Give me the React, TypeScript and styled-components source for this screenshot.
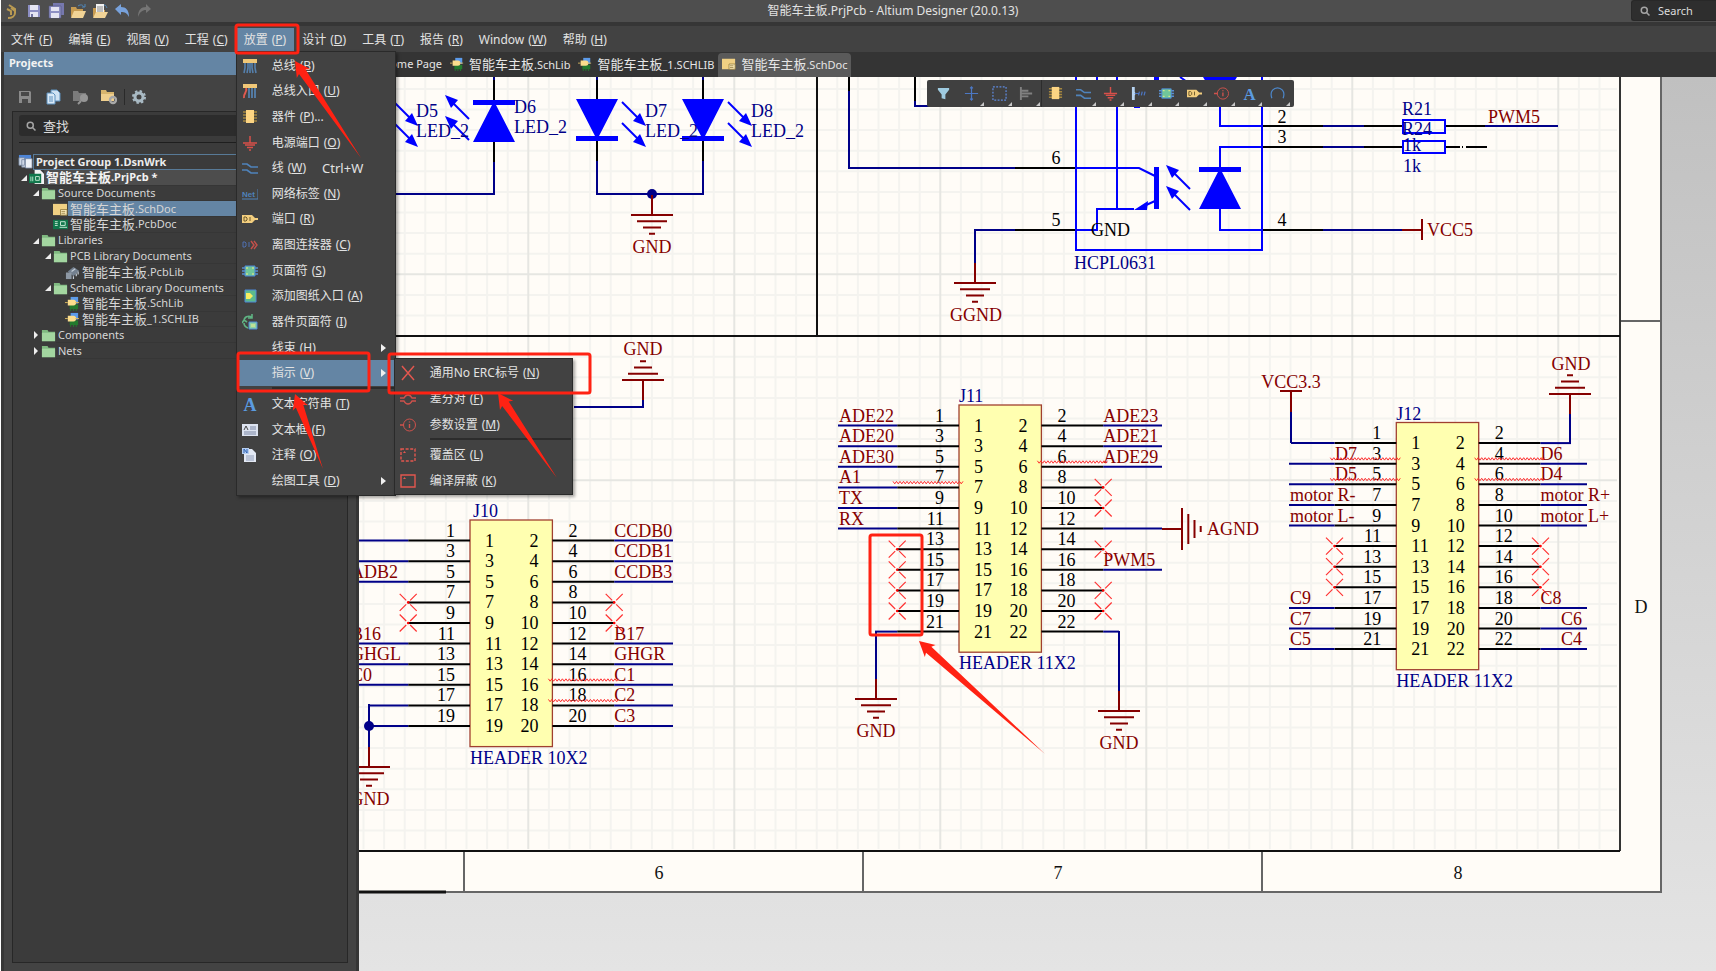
import React from "react";
import styled, { createGlobalStyle } from "styled-components";

const Global = createGlobalStyle`
  *, *::before, *::after { box-sizing: border-box; }
  body {
    margin: 0;
    background: #fff;
    color: #e2e2e2;
    font-family: "Noto Sans", "Noto Sans CJK SC", sans-serif;
    font-size: 12px;
    line-height: 16px;
  }
  button, input { font: inherit; color: inherit; }
  button { border: 0; margin: 0; padding: 0; background: none; text-align: left; white-space: nowrap; }
  ul { list-style: none; margin: 0; padding: 0; }
`;

/* ---------- page frame ---------- */

const Page = styled.div`
  position: relative;
  display: flex;
  flex-direction: column;
  min-height: 100vh;
  padding-left: 1px;
  overflow: hidden;
`;

const TitleBar = styled.header`
  display: flex;
  height: 26px;
  background: #4e4e4e;
  border-bottom: 4px solid #363636;
`;

const QuickTools = styled.div`
  display: flex;
  align-items: center;
  gap: 6px;
  width: 154px;
  padding-left: 3px;
`;

const IconButton = styled.button`
  display: flex;
  align-items: center;
  justify-content: center;
  width: 16px;
  height: 16px;
`;

const WindowTitle = styled.h1`
  flex: 1;
  margin: 0;
  font-size: 12px;
  font-weight: 400;
  line-height: 22px;
  text-align: center;
`;

const GlobalSearch = styled.label`
  display: flex;
  align-items: center;
  gap: 7px;
  width: 85px;
  height: 21px;
  padding-left: 7px;
  background: #2e2e2e;
  border: 1px solid #282828;
  border-right: 0;
  border-radius: 3px 0 0 3px;
`;

const PlainInput = styled.input<{ $size: number }>`
  flex: 1;
  min-width: 0;
  padding: 0;
  border: 0;
  outline: 0;
  background: none;
  font-size: ${(p) => p.$size}px;
  &::placeholder { color: #dcdcdc; opacity: 1; }
`;

const MenuBar = styled.nav`
  display: flex;
  align-items: flex-end;
  height: 26px;
  padding-left: 2px;
  background: #424242;
`;

const MenuSlot = styled.div`
  position: relative;
`;

const MenuButton = styled.button<{ $open?: boolean }>`
  height: 24px;
  padding: 0 8px;
  background: ${(p) => (p.$open ? "#6485a4" : "transparent")};
`;

const Mnemonic = styled.span`
  margin-left: 4px;
`;

const Work = styled.div`
  display: flex;
  flex: 1;
`;

/* ---------- drop-down menus ---------- */

const Popup = styled.div<{ $width: number }>`
  position: absolute;
  z-index: 2;
  width: ${(p) => p.$width}px;
  padding: 1px;
  background: #424242;
  border: 1px solid #2a2a2a;
  box-shadow: 2px 2px 3px rgba(0, 0, 0, 0.35);
`;

const DropDown = styled(Popup)`
  top: 100%;
  left: 0;
  margin-top: -1px;
`;

const SubMenu = styled(Popup)`
  top: -2px;
  left: 100%;
`;

const Group = styled.ul<{ $height: number }>`
  display: grid;
  grid-auto-rows: 1fr;
  height: ${(p) => p.$height}px;
`;

const Entry = styled.li<{ $active?: boolean }>`
  position: relative;
  display: flex;
  background: ${(p) => (p.$active ? "#6485a4" : "transparent")};
`;

const EntryButton = styled.button`
  display: flex;
  align-items: center;
  width: 100%;
`;

const EntryIcon = styled.span`
  display: flex;
  justify-content: center;
  width: 24px;
  margin-right: 10px;
`;

const Shortcut = styled.span`
  margin-left: 16px;
  font-size: 13px;
`;

const Caret = styled.span`
  margin-left: auto;
  margin-right: 8px;
  border: 4px solid transparent;
  border-left: 5px solid #f0f0f0;
  border-right: 0;
`;

const Separator = styled.hr`
  height: 2px;
  margin: 1px 0 2px 34px;
  border: 0;
  background: #2c2c2c;
`;

/* ---------- projects panel ---------- */

const Panel = styled.aside`
  display: flex;
  flex-direction: column;
  flex: none;
  width: 358px;
  background: #434343;
  border-left: 3px solid #373737;
  border-right: 3px solid #353535;
`;

const PanelTitle = styled.h2`
  height: 23px;
  margin: 0;
  padding-left: 5px;
  background: #6485a4;
  color: #f2f2f2;
  font-size: 11px;
  font-weight: 700;
  line-height: 22px;
`;

const PanelTools = styled.div`
  display: flex;
  align-items: center;
  gap: 12px;
  height: 36px;
  padding: 8px 0 0 13px;
`;

const ToolRule = styled.span`
  width: 1px;
  height: 16px;
  margin: 0 -6px 0 -5px;
  background: #2a2a2a;
`;

const PanelBody = styled.div`
  flex: 1;
  margin: 0 8px 8px;
  padding-top: 3px;
  background: #3b3b3b;
  border: 1px solid #272727;
`;

const TreeSearch = styled.label`
  display: flex;
  align-items: center;
  gap: 6px;
  height: 21px;
  margin: 0 6px;
  padding-left: 6px;
  background: #2c2c2c;
  border-radius: 3px;
`;

const SearchRule = styled.hr`
  height: 1px;
  margin: 6px 6px 11px;
  border: 0;
  background: #1e1e1e;
`;

const Tree = styled.ul`
  display: grid;
  grid-auto-rows: 1fr;
  height: 205px;
`;

const Node = styled.li<{ $level: number }>`
  display: flex;
  align-items: center;
  min-height: 0;
  padding-left: ${(p) => (p.$level ? p.$level * 12 - 7 : 5)}px;
`;

const Twisty = styled.span<{ $kind?: "open" | "closed" }>`
  display: flex;
  flex: none;
  width: 11px;
  justify-content: center;
  &::before {
    content: "";
    display: ${(p) => (p.$kind ? "block" : "none")};
    border-style: solid;
    border-color: ${(p) =>
      p.$kind === "open" ? "transparent #eee #eee transparent" : "transparent transparent transparent #eee"};
    border-width: ${(p) => (p.$kind === "open" ? "3px" : "4px 0 4px 4px")};
  }
`;

const NodeName = styled.span<{ $look?: "root" | "project" | "selected" }>`
  flex: 1;
  align-self: stretch;
  display: flex;
  align-items: center;
  padding-left: 2px;
  color: #d6d6d6;
  font-size: 11px;
  font-weight: ${(p) => (p.$look === "root" || p.$look === "project" ? 700 : 400)};
  white-space: nowrap;
  background: ${(p) => (p.$look === "selected" ? "#6485a4" : p.$look === "project" ? "#4d4d4d" : "none")};
  border-bottom: 1px solid #363636;
  ${(p) => p.$look === "root" && "border: 1px solid #587a97; border-right: 0; color: #ececec;"}
  ${(p) => p.$look === "project" && "color: #f2f2f2;"}
`;

const Han = styled.span`
  font-family: "Noto Sans CJK SC", sans-serif;
  font-size: 13px;
`;

/* ---------- documents ---------- */

const Documents = styled.main`
  display: flex;
  flex: 1;
  flex-direction: column;
  min-width: 0;
`;

const Tabs = styled.div`
  display: flex;
  align-items: flex-end;
  height: 25px;
  background: #343434;
`;

const Tab = styled.button<{ $active?: boolean; $home?: boolean }>`
  display: flex;
  align-items: center;
  justify-content: flex-end;
  gap: 5px;
  height: 24px;
  min-width: ${(p) => (p.$home ? 87 : 0)}px;
  padding: 0 4px 2px;
  border-radius: 4px 4px 0 0;
  background: ${(p) => (p.$active ? "#5a5a5a" : "transparent")};
  color: #e6e6e6;
  font-size: 11px;
`;

const Canvas = styled.section`
  position: relative;
  flex: 1;
  overflow: hidden;
  background: linear-gradient(#c0c0c0, #e4e4e4);
`;

const Sheet = styled.svg`
  display: block;
  text {
    font-family: "Liberation Serif", serif;
    font-size: 18px;
  }
`;

const ActiveBar = styled.div`
  position: absolute;
  top: 3px;
  left: 568px;
  display: flex;
  width: 367px;
  height: 27px;
  padding: 0 3px;
  background: #404040;
  border-radius: 2px;
`;

const BarButton = styled.button<{ $more?: boolean; $rule?: boolean }>`
  position: relative;
  display: flex;
  flex: 1;
  align-items: center;
  justify-content: center;
  border-right: ${(p) => (p.$rule ? "1px solid #2c2c2c" : "0")};
  &::after {
    content: "";
    position: absolute;
    right: 1px;
    bottom: 1px;
    display: ${(p) => (p.$more ? "block" : "none")};
    border: 2px solid;
    border-color: transparent #c8c8c8 #c8c8c8 transparent;
  }
`;

const Markup = styled.svg`
  position: absolute;
  top: 0;
  left: 0;
  z-index: 3;
  pointer-events: none;
`;

/* ---------- icons ---------- */

const drawings = {
  logo: <path d="M5 2l6 4v4c0 3-3 5-7 5M3 6l4 2v4M11 8L7 5" fill="none" stroke="#b99a52" strokeWidth="2" />,
  save: (
    <>
      <path d="M2 2h11l1 1v11H2z" fill="#8d8fc4" />
      <path d="M4 2h8v5H4zM4 9h8v5H4z" fill="#e4e4f2" />
      <path d="M5 11h2v3H5z" fill="#6f719f" />
    </>
  ),
  saveGray: (
    <>
      <path d="M2 2h11l1 1v11H2z" fill="#8a8a8a" />
      <path d="M4 3h8v4H4zM5 10h6v4H5z" fill="#484848" />
    </>
  ),
  saveAll: (
    <>
      <path d="M5 0h11v12H5z" fill="#7678ae" />
      <path d="M1 3h12v12H1z" fill="#8d8fc4" stroke="#55577f" strokeWidth=".6" />
      <path d="M3 4h8v4H3zM3 10h8v5H3z" fill="#e4e4f2" />
    </>
  ),
  open: (
    <>
      <path d="M1 14V4h5l1 2h6v3" fill="#c79b51" />
      <path d="M1 15l3-7h12l-3 7z" fill="#f1d396" />
      <path d="M8 3c3-2 5-1 6 1m1-3v3h-3" fill="none" stroke="#4f86b8" />
    </>
  ),
  openDoc: (
    <>
      <path d="M1 14V5h4l1 2h7v3" fill="#c79b51" />
      <path d="M4 1h8v9H4z" fill="#f2f2f2" />
      <path d="M5 4h6M5 6h6M5 8h6" stroke="#888" />
      <path d="M1 15l3-6h12l-3 6z" fill="#f1d396" />
      <path d="M12 2c2 0 2 1 3 3" fill="none" stroke="#4f86b8" />
    </>
  ),
  undo: <path d="M1 6l6-5v3c5 0 8 3 8 10-2-4-4-5-8-5v3z" fill="#78a2dc" />,
  redo: <path d="M15 6l-5-5v3c-5 0-8 3-8 10 2-5 4-7 8-7v3z" fill="#757575" />,
  docs: (
    <>
      <path d="M6 1h6l3 3v8H6z" fill="#cfe2f3" stroke="#5d90bd" />
      <path d="M2 4h6l2 2v9H2z" fill="#d9e9f7" stroke="#5d90bd" />
      <path d="M4 8h4M4 10h4M4 12h4" stroke="#5d90bd" />
    </>
  ),
  folderGray: (
    <>
      <path d="M0 2h5l1 2h7v8H0z" fill="#7b7b7b" />
      <circle cx="11" cy="9" r="4" fill="#969696" />
      <path d="M8 12l-3 3" stroke="#969696" strokeWidth="2" />
    </>
  ),
  folderGear: (
    <>
      <path d="M0 1h5l1 2h7v9H0z" fill="#d8b56e" />
      <path d="M0 5h13v7H0z" fill="#efcf8e" />
      <circle cx="12" cy="11" r="3" fill="none" stroke="#a8a8a8" strokeWidth="2.4" />
    </>
  ),
  gear: (
    <>
      <circle cx="8" cy="8" r="4" fill="none" stroke="#a9bac4" strokeWidth="3" />
      <circle cx="8" cy="8" r="6" fill="none" stroke="#a9bac4" strokeWidth="2" strokeDasharray="2.4 2.3" />
    </>
  ),
  search: (
    <>
      <circle cx="7" cy="7" r="4" fill="none" stroke="#a5a5a5" strokeWidth="2" />
      <path d="M10 10l4 4" stroke="#a5a5a5" strokeWidth="2" />
    </>
  ),
  bus: (
    <>
      <path d="M3 5v5l-1 5M6 5v5l-1 5M10 5v5l1 5M13 5v5l1 5M8 5v10" stroke="#5580ad" strokeWidth="1.6" fill="none" />
      <path d="M1 1h14v4H1z" fill="#f0c777" />
    </>
  ),
  busEntry: (
    <>
      <path d="M7 5v10M10 5v10M13 5v10" stroke="#5580ad" strokeWidth="1.8" fill="none" />
      <path d="M4 5c2 4-3 5-2 10" stroke="#e05a50" strokeWidth="2" fill="none" />
      <path d="M1 1h14v4H1z" fill="#f0c777" />
    </>
  ),
  part: (
    <>
      <path d="M1 3h14M1 6h14M1 9h14M1 12h14" stroke="#a3853f" strokeWidth="1.6" />
      <path d="M4 1h8v13H4z" fill="#fbd483" />
    </>
  ),
  power: <path d="M8 1v7M1 8h14M3 10h10M5 12.500h6M7 15h2" stroke="#d8504a" strokeWidth="1.500" fill="none" />,
  wire: <path d="M0 4h5l4 3h7M0 10h5l4 3h7" stroke="#4f83bb" strokeWidth="1.700" fill="none" />,
  net: (
    <>
      <text x="0" y="11" fontSize="8" fontWeight="700" fontFamily="Liberation Sans" fill="#4f83bb">Net</text>
      <path d="M0 13h16V3" stroke="#4f83bb" fill="none" />
    </>
  ),
  port: (
    <>
      <path d="M0 4h10l4 4-4 4H0zM12 7h4v2h-4z" fill="#f3ce7e" />
      <path d="M2 6h2l1 1v2l-1 1H2zM8 6v4" stroke="#6d5a2b" fill="none" />
    </>
  ),
  offSheet: (
    <>
      <path d="M1 5h2l1 1v3l-1 1H1zM7 5v5" stroke="#4f6fae" fill="none" />
      <path d="M9 4l3 4-3 4M12 4l3 4-3 4" stroke="#c5504a" fill="none" strokeWidth="1.400" />
    </>
  ),
  sheet: (
    <>
      <path d="M0 5h16M0 8h16M0 11h16" stroke="#5a8fd0" strokeWidth="1.500" />
      <path d="M3 3h10v10H3z" fill="#70c69a" stroke="#4c88d8" />
      <path d="M4 5h2M10 5h2M4 11h2M10 11h2" stroke="#f1ef88" />
    </>
  ),
  sheetEntry: (
    <>
      <path d="M3 2h11v12H3z" fill="#5cba8c" stroke="#4c88d8" />
      <path d="M4 5h4l3 3-3 3H4z" fill="#f5ee62" />
    </>
  ),
  deviceSheet: (
    <>
      <path d="M2 7C2 3 6 1 10 3M10 0v4H6M2 9c0 3 1 4 4 5M0 9l2-3 3 2" stroke="#5fb383" strokeWidth="1.600" fill="none" />
      <path d="M7 8h8v7H7z" fill="#8cd0a4" stroke="#4c88d8" />
      <path d="M10 10v3M12 10v3" stroke="#f1ef88" />
    </>
  ),
  letter: (
    <text x="8" y="15" fontSize="18" fontWeight="700" fontFamily="Liberation Serif" textAnchor="middle" fill="#5b9be0">A</text>
  ),
  frame: (
    <>
      <path d="M0 2h16v12H0z" fill="#dde3f0" />
      <path d="M8 5h6M8 7h6M2 10h12M2 12h12" stroke="#7d88a5" />
      <path d="M2 8l2-4 2 4" stroke="#444" fill="none" />
    </>
  ),
  note: (
    <>
      <path d="M2 2h8l4 4v9H2z" fill="#e3e9f4" />
      <path d="M0 1h7v6H0z" fill="#b6cff2" />
      <path d="M2 6V2l3 4V2" stroke="#2e63b5" fill="none" />
      <path d="M4 9h8M4 11h8M4 13h8" stroke="#8f9cb8" />
    </>
  ),
  cross: <path d="M2 1l12 14M14 1L2 15" stroke="#e2574f" strokeWidth="1.500" />,
  pair: <path d="M0 7h4c2-4 6-4 8 0h4M0 10h4c2 4 6 4 8 0h4" stroke="#cf524c" strokeWidth="1.400" fill="none" />,
  param: (
    <>
      <circle cx="9.500" cy="8" r="6" fill="none" stroke="#cf524c" />
      <path d="M0 8h4M9.500 7v4M9.500 4.500v1" stroke="#cf524c" strokeWidth="1.400" />
    </>
  ),
  blanket: (
    <>
      <path d="M1 2h14v12H1z" fill="none" stroke="#e2574f" strokeWidth="1.400" strokeDasharray="3 1.600" />
      <path d="M3 6l1.500-2L6 6z" fill="#e2574f" />
    </>
  ),
  mask: (
    <>
      <path d="M1 2h14v12H1z" fill="none" stroke="#e2574f" strokeWidth="1.400" />
      <path d="M3 6l1.500-2L6 6z" fill="#e2574f" />
    </>
  ),
  filter: <path d="M2 2h12v2l-4 5v5l-4-1V9L2 4z" fill="#9fcbe0" />,
  move: <path d="M8 1v14M1 8h14M6.500 2.500L8 1l1.500 1.500M6.500 13.500L8 15l1.500-1.500" stroke="#4c78c4" fill="none" strokeWidth="1.300" />,
  select: <path d="M1 1h14v14H1z" stroke="#5e8ae0" fill="none" strokeWidth="1.300" strokeDasharray="2 1.500" />,
  align: <path d="M2 1v14M3 5h7M3 8h11M3 11h7" stroke="#808080" strokeWidth="2" fill="none" />,
  harness: (
    <>
      <path d="M1 1h3v5l1 2-1 2v5H1z" fill="#b7d4f2" />
      <path d="M4 8h4M8 10l1-4M11 10l1-4M14 10l1-4" stroke="#4c76c4" fill="none" strokeWidth="1.300" />
    </>
  ),
  arc: <path d="M2 13C-1 5 5 2 8 2s9 3 6 11" stroke="#4c86c8" fill="none" strokeWidth="1.300" />,
  workspace: (
    <>
      <path d="M1 1h13v7H1z" fill="#4e85d6" />
      <path d="M1 4h6v8H1zM4 6h6v8H4z" fill="#cfd8e6" stroke="#73839c" strokeWidth=".8" />
      <path d="M8 5h7v10H8z" fill="#eef1f6" stroke="#73839c" strokeWidth=".8" />
    </>
  ),
  project: (
    <>
      <path d="M6 0h6l4 4v11H6z" fill="#f3f3f3" />
      <path d="M0 4h13v10H0z" fill="#11774c" />
      <path d="M2 7v5M4 7v5M7 7h4v4H7z" stroke="#bfe6cf" fill="none" />
    </>
  ),
  folder: (
    <>
      <path d="M1 2h6l1 2h7v10H1z" fill="#7fb980" />
      <path d="M1 5h14v9H1z" fill="#a3d6a0" />
    </>
  ),
  schDoc: (
    <>
      <path d="M0 2h15v12H0z" fill="#f0d083" />
      <path d="M8 8h7v6H8zM9 10h4M9 12h4" fill="#f9e9b8" stroke="#8b7334" strokeWidth=".8" />
    </>
  ),
  pcbDoc: (
    <>
      <path d="M0 3h16v10H0z" fill="#11774c" />
      <path d="M2 5h3M2 7h3M2 9h3M8 5h5v4H8zM7 11h8" stroke="#c7e9d5" fill="none" />
    </>
  ),
  pcbLib: (
    <>
      <path d="M3 7l6-5 6 4-6 6z" fill="#73808f" />
      <path d="M7 7l4-3M9 12v3M12 9v3M14 7v3" stroke="#c3ccd6" strokeWidth="1.300" />
      <path d="M1 8h6v7H1z" fill="#8d98a4" />
    </>
  ),
  schLib: (
    <>
      <path d="M6 1h8v7H6z" fill="#5c9bea" />
      <path d="M5 9h9v5H5z" fill="#237a2e" />
      <path d="M6 13v3M9 13v3M12 13v3" stroke="#237a2e" />
      <path d="M3 4h6c4 0 4 6 0 6H3z" fill="#fbdd8d" />
      <path d="M0 7h3M11 7h4" stroke="#d8b760" />
    </>
  ),
};

type IconName = keyof typeof drawings;

const Glyph = styled.svg`
  flex: none;
`;

const Icon = ({ name, size = 16 }: { name: IconName; size?: number }) => (
  <Glyph width={size} height={size} viewBox="0 0 16 16" aria-hidden="true">
    {drawings[name]}
  </Glyph>
);

/* ---------- menu data ---------- */

type Item = { icon?: IconName; name: string; keyChar: string; tail?: string; shortcut?: string; more?: boolean; active?: boolean; sub?: Item[][] };

const directives: Item[][] = [
  [
    { icon: "cross", name: "通用No ERC标号", keyChar: "N" },
    { icon: "pair", name: "差分对", keyChar: "F" },
    { icon: "param", name: "参数设置", keyChar: "M" },
  ],
  [
    { icon: "blanket", name: "覆盖区", keyChar: "L" },
    { icon: "mask", name: "编译屏蔽", keyChar: "K" },
  ],
];

const placeMenu: Item[][] = [
  [
    { icon: "bus", name: "总线", keyChar: "B" },
    { icon: "busEntry", name: "总线入口", keyChar: "U" },
    { icon: "part", name: "器件", keyChar: "P", tail: "..." },
    { icon: "power", name: "电源端口", keyChar: "O" },
    { icon: "wire", name: "线", keyChar: "W", shortcut: "Ctrl+W" },
    { icon: "net", name: "网络标签", keyChar: "N" },
    { icon: "port", name: "端口", keyChar: "R" },
    { icon: "offSheet", name: "离图连接器", keyChar: "C" },
    { icon: "sheet", name: "页面符", keyChar: "S" },
    { icon: "sheetEntry", name: "添加图纸入口", keyChar: "A" },
    { icon: "deviceSheet", name: "器件页面符", keyChar: "I" },
    { name: "线束", keyChar: "H", more: true },
    { name: "指示", keyChar: "V", more: true, active: true, sub: directives },
  ],
  [
    { icon: "letter", name: "文本字符串", keyChar: "T" },
    { icon: "frame", name: "文本框", keyChar: "F" },
    { icon: "note", name: "注释", keyChar: "O" },
    { name: "绘图工具", keyChar: "D", more: true },
  ],
];

const menus: [string, string][] = [
  ["文件", "F"], ["编辑", "E"], ["视图", "V"], ["工程", "C"], ["放置", "P"],
  ["设计", "D"], ["工具", "T"], ["报告", "R"], ["Window", "W"], ["帮助", "H"],
];

const Label = ({ name, keyChar, tail }: { name: string; keyChar: string; tail?: string }) => (
  <span>
    {name}
    <Mnemonic>(<u>{keyChar}</u>){tail}</Mnemonic>
  </span>
);

const MenuGroups = ({ groups, heights }: { groups: Item[][]; heights: number[] }) => (
  <>
    {groups.map((items, g) => (
      <React.Fragment key={g}>
        {g > 0 && <Separator />}
        <Group $height={heights[g]}>
          {items.map((it) => (
            <Entry key={it.name} $active={it.active}>
              <EntryButton>
                <EntryIcon>{it.icon && <Icon name={it.icon} />}</EntryIcon>
                <Label name={it.name} keyChar={it.keyChar} tail={it.tail} />
                {it.shortcut && <Shortcut>{it.shortcut}</Shortcut>}
                {it.more && <Caret />}
              </EntryButton>
              {it.sub && (
                <SubMenu $width={179}>
                  <MenuGroups groups={it.sub} heights={[77, 51]} />
                </SubMenu>
              )}
            </Entry>
          ))}
        </Group>
      </React.Fragment>
    ))}
  </>
);

/* ---------- project tree ---------- */

type TreeRow = { level: number; icon: IconName; han?: string; text: string; kind?: "open" | "closed"; look?: "root" | "project" | "selected" };

const tree: TreeRow[] = [
  { level: 0, icon: "workspace", text: "Project Group 1.DsnWrk", look: "root" },
  { level: 1, icon: "project", han: "智能车主板", text: ".PrjPcb *", kind: "open", look: "project" },
  { level: 2, icon: "folder", text: "Source Documents", kind: "open" },
  { level: 3, icon: "schDoc", han: "智能车主板", text: ".SchDoc", look: "selected" },
  { level: 3, icon: "pcbDoc", han: "智能车主板", text: ".PcbDoc" },
  { level: 2, icon: "folder", text: "Libraries", kind: "open" },
  { level: 3, icon: "folder", text: "PCB Library Documents", kind: "open" },
  { level: 4, icon: "pcbLib", han: "智能车主板", text: ".PcbLib" },
  { level: 3, icon: "folder", text: "Schematic Library Documents", kind: "open" },
  { level: 4, icon: "schLib", han: "智能车主板", text: ".SchLib" },
  { level: 4, icon: "schLib", han: "智能车主板", text: "_1.SCHLIB" },
  { level: 2, icon: "folder", text: "Components", kind: "closed" },
  { level: 2, icon: "folder", text: "Nets", kind: "closed" },
];

/* ---------- schematic ---------- */

const NAVY = "#000088";
const BLUE = "#0000ff";
const MAROON = "#850000";
const STEP = 20.6;

const Line = ({ d, c = NAVY, w = 2 }: { d: string; c?: string; w?: number }) => (
  <path d={d} stroke={c} strokeWidth={w} fill="none" />
);

const T = ({ x, y, c = MAROON, a = "start", children }: { x: number; y: number; c?: string; a?: "start" | "middle" | "end"; children: React.ReactNode }) => (
  <text x={x} y={y} fill={c} textAnchor={a}>{children}</text>
);

/* Ground symbol: (x, y) is the widest bar, turned about that point. */
const Ground = ({ x, y, turn = 0 }: { x: number; y: number; turn?: number }) => (
  <g transform={`translate(${x} ${y}) rotate(${turn})`}>
    <Line c={MAROON} d="M0 -20V0M-21 0H21M-15 6.300H15M-9 12.500H9M-3 18.700H3" />
  </g>
);

const NoErc = ({ x, y }: { x: number; y: number }) => (
  <g transform={`translate(${x} ${y})`}>
    <path d="M-8.500 -8.500L-2 -2M8.500 -8.500L2 -2M-8.500 8.500L-2 2M8.500 8.500L2 2" stroke="#f33" strokeWidth="1.200" />
    <circle r="1.300" fill="#f00" />
  </g>
);

const Squiggle = ({ x, y }: { x: number; y: number }) => (
  <path
    d={`M${x} ${y - 1}` + Array.from({ length: 20 }, () => "l1.750 2.400l1.750 -2.400").join("")}
    stroke="#ff2a2a"
    fill="none"
  />
);

/* Light arrow of an LED, pointing at (x, y). */
const Ray = ({ x, y, up }: { x: number; y: number; up?: boolean }) => (
  <g transform={`translate(${x} ${y}) rotate(${up ? 180 : 0})`}>
    <Line c={BLUE} d="M-24 -24L-6 -6" />
    <path d="M0 0L-13 -5L-6 -13Z" fill={BLUE} />
  </g>
);

const Led = ({ x, y, up }: { x: number; y: number; up?: boolean }) => (
  <g transform={`translate(${x} ${y}) scale(1 ${up ? -1 : 1})`} fill={BLUE}>
    <path d="M-21 -21H21L2 16H21V21H-21V16H-2Z" />
  </g>
);

type Side = { net?: string; at?: number; wire?: number; x?: boolean; warn?: boolean };

const Header = ({ x, y, name, title, titleDx = 0, left, right }: { x: number; y: number; name: string; title: string; titleDx?: number; left: Side[]; right: Side[] }) => {
  const w = STEP * 4;
  const r = x + w;
  const h = STEP * (left.length + 1);
  const pin = STEP * 3;
  return (
    <g>
      <rect x={x} y={y} width={w} height={h} fill="#ffffb0" stroke="#a04030" strokeWidth="1.300" />
      <T x={x + titleDx} y={y - 3} c={NAVY}>{title}</T>
      <T x={x} y={y + h + 17} c={NAVY}>{name}</T>
      {left.map((s, i) => {
        const py = y + STEP * (i + 1);
        return (
          <g key={i}>
            <Line c="#000" d={`M${x - pin} ${py}H${x}`} />
            <T x={x - 15} y={py - 4} c="#000" a="end">{i * 2 + 1}</T>
            <T x={x + 15} y={py + 6} c="#000">{i * 2 + 1}</T>
            {s.wire && <Line d={`M${s.wire} ${py}H${x - pin}`} />}
            {s.net && <T x={s.at ?? (s.wire ?? x) + 1} y={py - 4}>{s.net}</T>}
            {s.warn && <Squiggle x={x - 66} y={py - 5} />}
            {s.x && <NoErc x={x - pin} y={py} />}
          </g>
        );
      })}
      {right.map((s, i) => {
        const py = y + STEP * (i + 1);
        return (
          <g key={i}>
            <Line c="#000" d={`M${r} ${py}H${r + pin}`} />
            <T x={r + 16} y={py - 4} c="#000">{i * 2 + 2}</T>
            <T x={r - 14} y={py + 6} c="#000" a="end">{i * 2 + 2}</T>
            {s.wire && <Line d={`M${r + pin} ${py}H${s.wire}`} />}
            {s.net && <T x={s.at ?? r + pin} y={py - 4}>{s.net}</T>}
            {s.warn && <Squiggle x={r - 4} y={py - 5} />}
            {s.x && <NoErc x={r + pin} y={py} />}
          </g>
        );
      })}
    </g>
  );
};

const gridLines = (major: boolean) => {
  let d = "";
  for (let k = -9; k <= 53; k++) {
    const gx = 528.3 + STEP * k;
    if ((k % 10 === 0) === major && gx > 359 && gx < 1618) d += `M${gx} 77V849`;
  }
  for (let k = -9; k <= 27; k++) {
    const gy = 274.3 + STEP * k;
    if ((k % 10 === 0) === major && gy > 77 && gy < 849) d += `M359 ${gy}H1617`;
  }
  return d;
};

const X: Side = { x: true };

const Schematic = () => (
  <Sheet width="1357" height="894" viewBox="359 77 1357 894" role="img" aria-label="智能车主板.SchDoc">
    <rect x="359" y="77" width="1302" height="815" fill="#fffcf7" />
    <Line c="#f4f3ef" d={gridLines(false)} />
    <Line c="#e6e6e2" d={gridLines(true)} />
    <Line c="#666" d="M1661 77V892H359M1620 321H1661M464 852V892M863 852V892M1262 852V892" />
    <Line c="#333" d="M1620 77V851" />
    <Line c="#111" d="M359 851H1620M359 336H1620M817 77V336" />
    <Line c="#111" w={3} d="M359 892H446" />
    <T x={659} y={879} c="#111" a="middle">6</T>
    <T x={1058} y={879} c="#111" a="middle">7</T>
    <T x={1458} y={879} c="#111" a="middle">8</T>
    <T x={1641} y={613} c="#111" a="middle">D</T>

    {/* LED row */}
    <Line c="#000" d="M494 77V162M597 77V161M703 77V161" />
    <Line d="M494 77V80M597 77V80M703 77V80M494 162V194H359M597 161V194H703V161" />
    <Led x={494} y={121} up />
    <Led x={597} y={120} />
    <Led x={703} y={120} />
    <Ray x={418} y={126} />
    <Ray x={418} y={147} />
    <Ray x={445} y={95} up />
    <Ray x={445} y={116} up />
    <Ray x={646} y={126} />
    <Ray x={646} y={147} />
    <Ray x={752} y={126} />
    <Ray x={752} y={147} />
    <T x={416} y={117} c={NAVY}>D5</T>
    <T x={416} y={137} c={NAVY}>LED_2</T>
    <T x={514} y={113} c={NAVY}>D6</T>
    <T x={514} y={133} c={NAVY}>LED_2</T>
    <T x={645} y={117} c={NAVY}>D7</T>
    <T x={645} y={137} c={NAVY}>LED_2</T>
    <T x={751} y={117} c={NAVY}>D8</T>
    <T x={751} y={137} c={NAVY}>LED_2</T>
    <circle cx="652" cy="194" r="5" fill={NAVY} />
    <Ground x={652} y={215} />
    <T x={652} y={253} a="middle">GND</T>

    {/* Optocoupler */}
    <Line c="#000" d="M849 77V91M915 77V101M1015 168H1076M1015 230H1076M1262 126H1323M1262 147H1323M1262 230H1323" />
    <Line d="M849 91V168H1015M915 101V106H1015M1015 230H975V264" />
    <Line c={BLUE} d="M1076 77V250H1262V77M1097 77V106M1117 77V209M1180 77L1190 84M1134 107H1140M1220 100V126H1262M1220 168V147H1262M1220 208V230H1262" />
    <Line c={BLUE} d="M1076 168H1139L1155 176M1155 201L1144 206M1134 209H1097V230H1076" />
    <path d="M1154 77h5v30h-5zM1154 167h5v42h-5zM1203 77h34l-17 28zM1134 210l14-9-1 9z" fill={BLUE} />
    <Led x={1220} y={188} up />
    <Ray x={1166} y={165} up />
    <Ray x={1166} y={186} up />
    <T x={1056} y={164} c="#000" a="middle">6</T>
    <T x={1056} y={226} c="#000" a="middle">5</T>
    <T x={1282} y={123} c="#000" a="middle">2</T>
    <T x={1282} y={143} c="#000" a="middle">3</T>
    <T x={1282} y={226} c="#000" a="middle">4</T>
    <T x={1091} y={236} c="#000">GND</T>
    <T x={1074} y={269} c={NAVY}>HCPL0631</T>
    <Ground x={975} y={283} />
    <T x={976} y={321} a="middle">GGND</T>

    {/* Series resistors and supply */}
    <Line d="M1323 126H1364M1323 147H1364M1485 126H1558M1323 230H1402" />
    <Line c="#000" d="M1364 126H1403M1364 147H1403M1445 126H1485M1445 147H1460M1462 147H1463M1466 147H1487" />
    <Line c={BLUE} d="M1403 120H1445V133H1403ZM1403 141H1445V153H1403Z" />
    <T x={1402} y={115} c={NAVY}>R21</T>
    <T x={1402} y={135} c={NAVY}>R24</T>
    <T x={1403} y={151} c={NAVY}>1k</T>
    <T x={1403} y={172} c={NAVY}>1k</T>
    <T x={1488} y={123}>PWM5</T>
    <Line c={MAROON} d="M1402 230H1422M1422 219V240" />
    <T x={1427} y={236}>VCC5</T>

    {/* J10 */}
    <Header
      x={470} y={520} title="J10" titleDx={3} name="HEADER 10X2"
      left={[
        { wire: 359 }, { wire: 359 }, { wire: 359, net: "ADB2", at: 351 }, X, X,
        { wire: 359, net: "B16", at: 351 }, { wire: 359, net: "GHGL", at: 351 }, { wire: 359, net: "C0", at: 351 },
        { wire: 369 }, { wire: 369 },
      ]}
      right={[
        { wire: 673, net: "CCDB0" }, { wire: 673, net: "CCDB1" }, { wire: 673, net: "CCDB3" }, X, X,
        { wire: 673, net: "B17" }, { wire: 673, net: "GHGR" }, { wire: 673, net: "C1", warn: true },
        { wire: 673, net: "C2", warn: true }, { wire: 673, net: "C3" },
      ]}
    />
    <Line d="M369 704V748" />
    <circle cx="369" cy="726" r="5" fill={NAVY} />
    <Ground x={369} y={767} />
    <T x={370} y={805} a="middle">GND</T>
    <Line d="M574 407H643V399" />
    <Ground x={643} y={380} turn={180} />
    <T x={643} y={355} a="middle">GND</T>

    {/* J11 */}
    <Header
      x={959} y={405} title="J11" name="HEADER 11X2"
      left={[
        { wire: 838, net: "ADE22" }, { wire: 838, net: "ADE20" }, { wire: 838, net: "ADE30" }, { wire: 838, net: "A1", warn: true },
        { wire: 838, net: "TX" }, { wire: 838, net: "RX" }, X, X, X, X, { wire: 875 },
      ]}
      right={[
        { wire: 1162, net: "ADE23" }, { wire: 1162, net: "ADE21" }, { wire: 1162, net: "ADE29", warn: true }, X, X,
        { wire: 1162 }, X, { wire: 1162, net: "PWM5" }, X, X, { wire: 1119 },
      ]}
    />
    <Line d="M876 631V680M1119 631V692" />
    <Ground x={876} y={699} />
    <T x={876} y={737} a="middle">GND</T>
    <Ground x={1119} y={711} />
    <T x={1119} y={749} a="middle">GND</T>
    <Ground x={1182} y={529} turn={-90} />
    <T x={1207} y={535}>AGND</T>

    {/* J12 */}
    <Header
      x={1396.3} y={422.5} title="J12" name="HEADER 11X2"
      left={[
        { wire: 1291 }, { wire: 1289, net: "D7", at: 1335, warn: true }, { wire: 1289, net: "D5", at: 1335, warn: true },
        { wire: 1289, net: "motor R-" }, { wire: 1289, net: "motor L-" }, X, X, X,
        { wire: 1289, net: "C9" }, { wire: 1289, net: "C7" }, { wire: 1289, net: "C5" },
      ]}
      right={[
        { wire: 1571 }, { wire: 1587, net: "D6", warn: true }, { wire: 1587, net: "D4", warn: true },
        { wire: 1587, net: "motor R+" }, { wire: 1587, net: "motor L+" }, X, X, X,
        { wire: 1587, net: "C8" }, { wire: 1587, net: "C6", at: 1561 }, { wire: 1587, net: "C4", at: 1561 },
      ]}
    />
    <Line d="M1291 443V411M1570 443V414" />
    <Line c={MAROON} d="M1291 412V391M1280 391H1302" />
    <T x={1291} y={388} a="middle">VCC3.3</T>
    <Ground x={1570} y={394} turn={180} />
    <T x={1571} y={370} a="middle">GND</T>
  </Sheet>
);

const barTools: { icon: IconName; label: string; more?: boolean; rule?: boolean }[] = [
  { icon: "filter", label: "过滤" },
  { icon: "move", label: "移动", more: true },
  { icon: "select", label: "选择", more: true },
  { icon: "align", label: "对齐", more: true, rule: true },
  { icon: "part", label: "器件" },
  { icon: "wire", label: "线", more: true },
  { icon: "power", label: "电源端口", more: true },
  { icon: "harness", label: "线束", more: true },
  { icon: "sheet", label: "页面符", more: true },
  { icon: "port", label: "端口", more: true },
  { icon: "param", label: "参数设置", more: true },
  { icon: "letter", label: "文本字符串", more: true },
  { icon: "arc", label: "弧", more: true },
];

/* ---------- red mark-up ---------- */

/* Tapered arrow: a barbed head at the tip, narrowing to a point at the tail. */
const Pointer = ({ tip, tail }: { tip: [number, number]; tail: [number, number] }) => {
  const dx = tail[0] - tip[0];
  const dy = tail[1] - tip[1];
  const len = Math.hypot(dx, dy);
  const angle = (Math.atan2(dy, dx) * 180) / Math.PI;
  return (
    <path
      transform={`translate(${tip[0]} ${tip[1]}) rotate(${angle})`}
      d={`M0 0L15 -8L13 -4L${len} 0L13 4L15 8Z`}
      fill="#ff2213"
    />
  );
};

const MarkupLayer = () => (
  <Markup width="1100" height="800" aria-hidden="true">
    <g fill="none" stroke="#ff2213" strokeWidth="3">
      <rect x="236" y="25" width="62" height="28" rx="2" />
      <rect x="238" y="353" width="131" height="38" rx="2" />
      <rect x="389" y="354" width="201" height="39" rx="2" />
      <rect x="870" y="535" width="52" height="100" rx="2" />
    </g>
    <Pointer tip={[295, 61]} tail={[361, 158]} />
    <Pointer tip={[295, 394]} tail={[323, 469]} />
    <Pointer tip={[498, 393]} tail={[557, 478]} />
    <Pointer tip={[919, 641]} tail={[1045, 754]} />
  </Markup>
);

/* ---------- page ---------- */

const quick: [IconName, string][] = [
  ["logo", "Altium"], ["save", "保存"], ["saveAll", "全部保存"], ["open", "打开"],
  ["openDoc", "打开文档"], ["undo", "撤销"], ["redo", "重做"],
];

export default function App() {
  return (
    <Page>
      <Global />
      <TitleBar>
        <QuickTools>
          {quick.map(([icon, label]) => (
            <IconButton key={icon} aria-label={label}><Icon name={icon} /></IconButton>
          ))}
        </QuickTools>
        <WindowTitle>智能车主板.PrjPcb - Altium Designer (20.0.13)</WindowTitle>
        <GlobalSearch>
          <Icon name="search" size={12} />
          <PlainInput $size={11} placeholder="Search" aria-label="Search" />
        </GlobalSearch>
      </TitleBar>

      <MenuBar>
        {menus.map(([name, keyChar]) => (
          <MenuSlot key={name}>
            <MenuButton $open={keyChar === "P"}><Label name={name} keyChar={keyChar} /></MenuButton>
            {keyChar === "P" && (
              <DropDown $width={160}>
                <MenuGroups groups={placeMenu} heights={[333, 103]} />
              </DropDown>
            )}
          </MenuSlot>
        ))}
      </MenuBar>

      <Work>
        <Panel>
          <PanelTitle>Projects</PanelTitle>
          <PanelTools>
            <IconButton aria-label="保存"><Icon name="saveGray" /></IconButton>
            <IconButton aria-label="文档"><Icon name="docs" /></IconButton>
            <IconButton aria-label="查找文件夹"><Icon name="folderGray" /></IconButton>
            <IconButton aria-label="文件夹设置"><Icon name="folderGear" /></IconButton>
            <ToolRule />
            <IconButton aria-label="设置"><Icon name="gear" /></IconButton>
          </PanelTools>
          <PanelBody>
            <TreeSearch>
              <Icon name="search" size={12} />
              <PlainInput $size={13} placeholder="查找" aria-label="查找" />
            </TreeSearch>
            <SearchRule />
            <Tree>
              {tree.map((n) => (
                <Node key={(n.han ?? "") + n.text} $level={n.level}>
                  {n.level > 0 && <Twisty $kind={n.kind} />}
                  <Icon name={n.icon} size={15} />
                  <NodeName $look={n.look}>
                    {n.han && <Han>{n.han}</Han>}
                    {n.text}
                  </NodeName>
                </Node>
              ))}
            </Tree>
          </PanelBody>
        </Panel>

        <Documents>
          <Tabs>
            <Tab $home>Home Page</Tab>
            <Tab><Icon name="schLib" size={14} /><span><Han>智能车主板</Han>.SchLib</span></Tab>
            <Tab><Icon name="schLib" size={14} /><span><Han>智能车主板</Han>_1.SCHLIB</span></Tab>
            <Tab $active><Icon name="schDoc" size={14} /><span><Han>智能车主板</Han>.SchDoc</span></Tab>
          </Tabs>
          <Canvas>
            <Schematic />
            <ActiveBar>
              {barTools.map((t) => (
                <BarButton key={t.label} aria-label={t.label} $more={t.more} $rule={t.rule}>
                  <Icon name={t.icon} size={15} />
                </BarButton>
              ))}
            </ActiveBar>
          </Canvas>
        </Documents>
      </Work>
      <MarkupLayer />
    </Page>
  );
}
